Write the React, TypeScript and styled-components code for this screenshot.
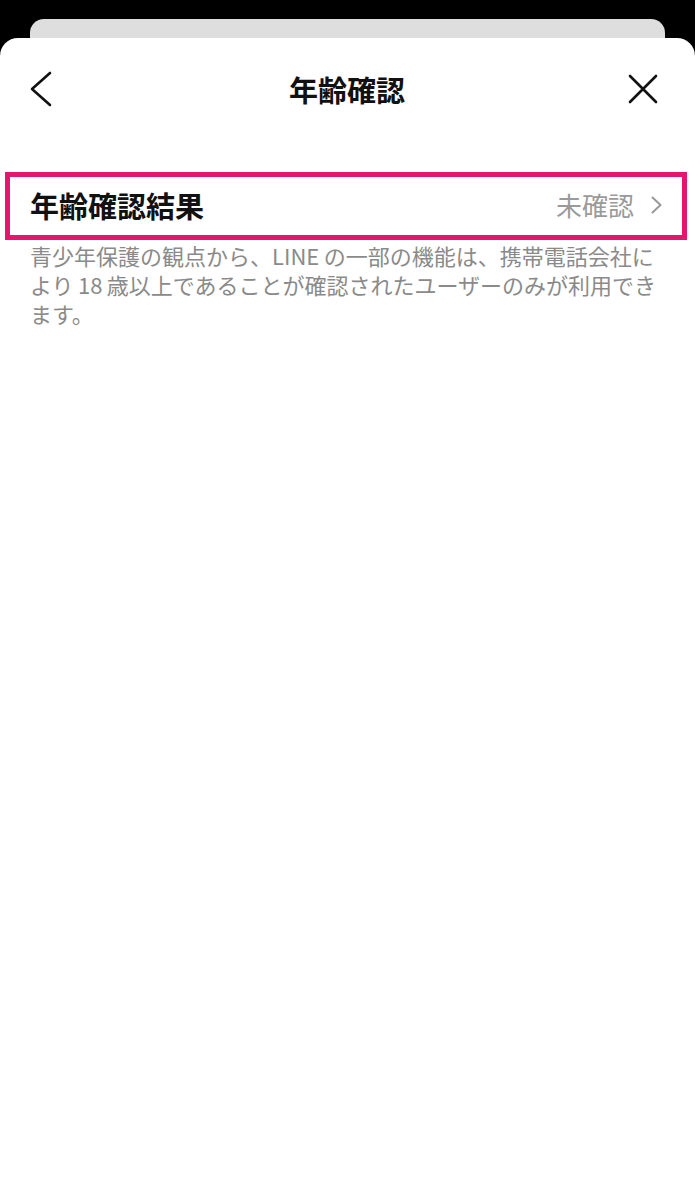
import * as React from 'react'
import styled, { createGlobalStyle } from 'styled-components'

const GlobalStyle = createGlobalStyle`
    html, body {
        margin: 0;
        padding: 0;
        background: #000;
    }
    body {
        font-family: "Noto Sans CJK JP", "Noto Sans", sans-serif;
        -webkit-font-smoothing: antialiased;
    }
`

const Page = styled.div`
    display: flex;
    flex-direction: column;
    width: 695px;
    min-height: 1200px;
    padding-top: 19px;
    box-sizing: border-box;
    background: #000;
`

const BackCard = styled.div`
    height: 19px;
    margin: 0 30px;
    background-color: #dedede;
    border-radius: 14px 14px 0 0;
`

const Sheet = styled.div`
    flex: 1;
    display: flex;
    flex-direction: column;
    background-color: #fff;
    border-radius: 18px 18px 0 0;
`

const Header = styled.div`
    display: grid;
    grid-template-columns: 1fr auto 1fr;
    align-items: center;
    height: 102px;
    padding: 0 36px 0 25px;
`

const IconButton = styled.button<{ $end?: boolean }>`
    display: flex;
    align-items: center;
    justify-content: center;
    justify-self: ${p => (p.$end ? 'end' : 'start')};
    width: 32px;
    height: 40px;
    padding: 0;
    border: none;
    background: none;
`

const Title = styled.h1`
    margin: 0 0 0 10px;
    font-size: 29px;
    font-weight: 700;
    color: #111;
`

const Content = styled.div`
    padding-top: 32px;
`

const Row = styled.div`
    display: flex;
    align-items: center;
    justify-content: space-between;
    height: 58px;
    margin: 0 8px 0 5px;
    padding: 0 20px 0 20px;
    border: 5px solid #e5166e;
`

const RowLabel = styled.span`
    font-size: 29px;
    font-weight: 700;
    color: #111;
    margin-top: -3px;
`

const RowValue = styled.span`
    display: flex;
    align-items: center;
    gap: 17px;
    margin-top: -3px;
    font-size: 26px;
    color: #9a9a9a;
`

const Note = styled.p`
    margin: 1px 0 0;
    padding: 0 30px;
    font-size: 22px;
    line-height: 29px;
    color: #8a8a8a;
    white-space: nowrap;
`

const ChevronLeft = () => (
    <svg width="24" height="36" viewBox="0 0 24 36" fill="none">
        <polyline points="21,2 3,18 21,34" stroke="#111" strokeWidth="2.6" strokeLinecap="round" strokeLinejoin="round" />
    </svg>
)

const Close = () => (
    <svg width="30" height="30" viewBox="0 0 30 30" fill="none">
        <path d="M2 2 L28 28 M28 2 L2 28" stroke="#111" strokeWidth="2.6" strokeLinecap="round" />
    </svg>
)

const ChevronRight = () => (
    <svg width="11" height="18" viewBox="0 0 11 18" fill="none">
        <polyline points="1.5,1.5 9.5,9 1.5,16.5" stroke="#999" strokeWidth="2" strokeLinecap="round" strokeLinejoin="round" />
    </svg>
)

export default () => {
    return <Page>
        <GlobalStyle />
        <BackCard />
        <Sheet>
            <Header>
                <IconButton><ChevronLeft /></IconButton>
                <Title>年齢確認</Title>
                <IconButton $end><Close /></IconButton>
            </Header>
            <Content>
                <Row>
                    <RowLabel>年齢確認結果</RowLabel>
                    <RowValue>未確認<ChevronRight /></RowValue>
                </Row>
                <Note>
                    青少年保護の観点から、LINE&#8201;の一部の機能は、携帯電話会社に<br />
                    より&#8201;18&#8201;歳以上であることが確認されたユーザーのみが利用でき<br />
                    ます。
                </Note>
            </Content>
        </Sheet>
    </Page>
}
